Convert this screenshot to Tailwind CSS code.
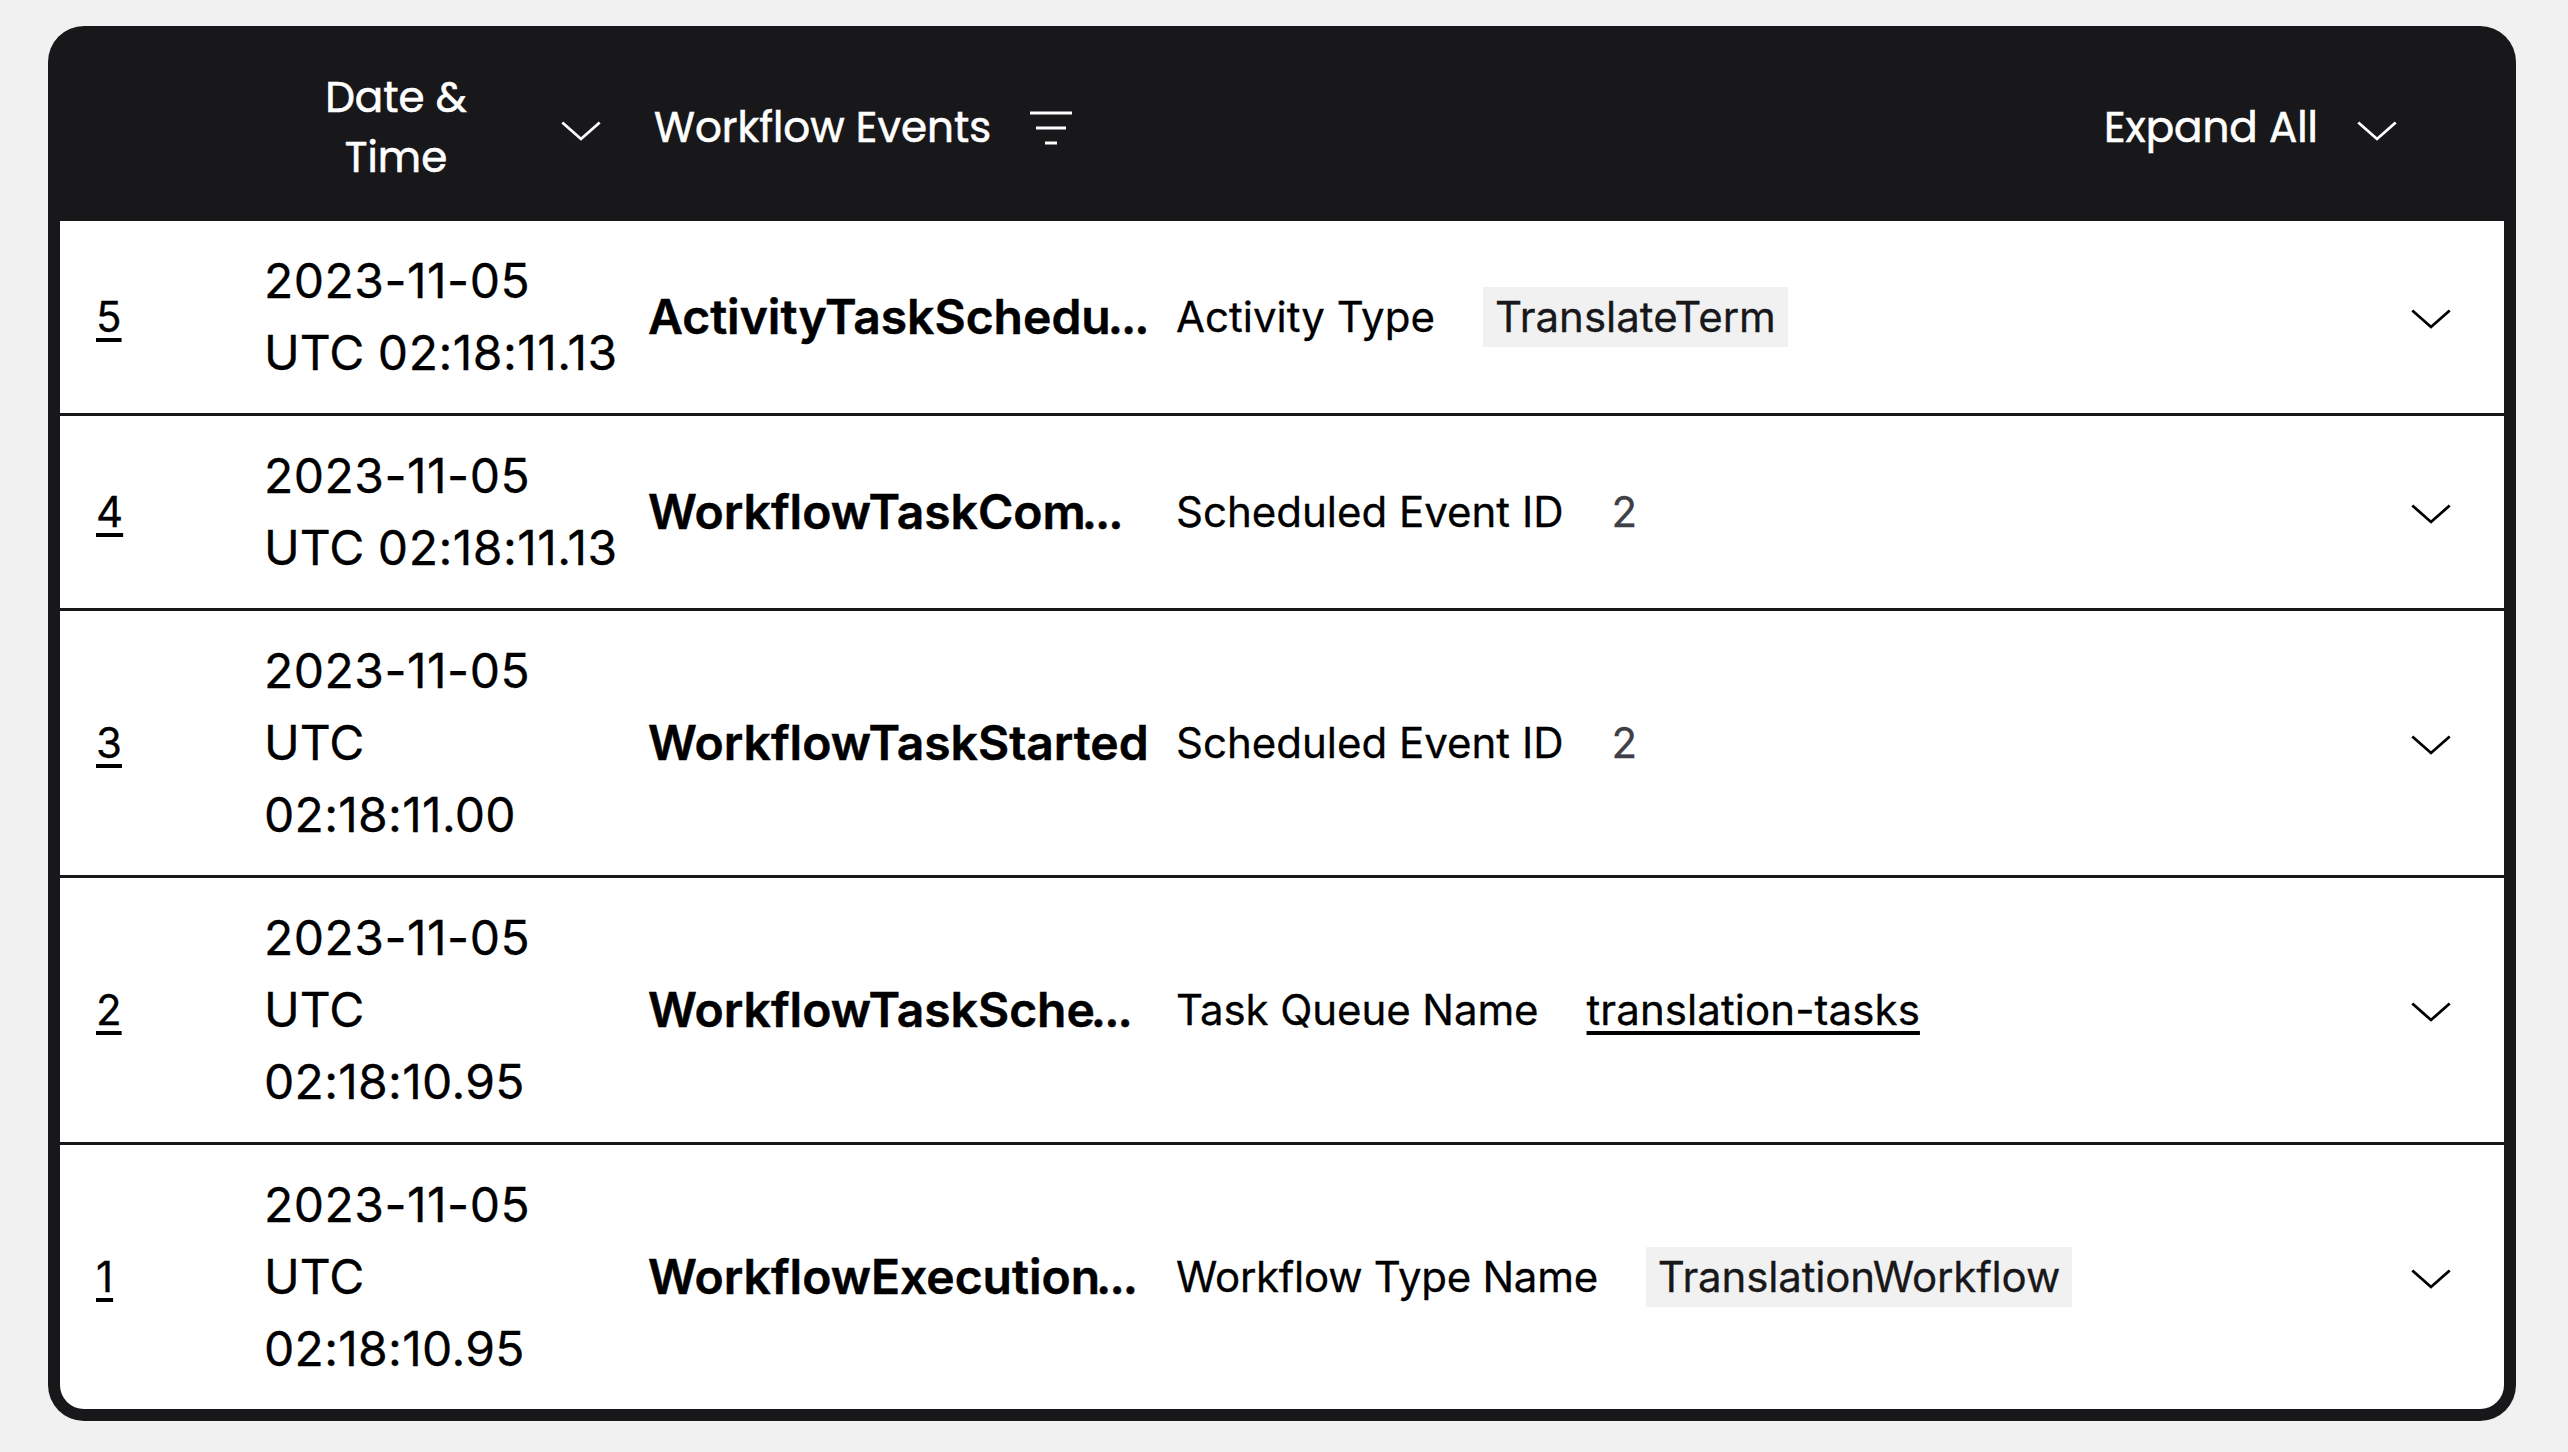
<!DOCTYPE html>
<html lang="en">
<head>
<meta charset="utf-8">
<title>Workflow Events</title>
<script src="https://cdn.jsdelivr.net/npm/@tailwindcss/browser@4"></script>
</head>
<body class="bg-[#f1f1f1] font-['Inter',sans-serif] text-black [-webkit-text-stroke:0.3px]">
<svg class="hidden">
  <symbol id="chevron" viewBox="0 0 40 20"><path d="M1.3 1.5 20 18 38.7 1.5" fill="none" stroke="currentColor" stroke-width="2.8"/></symbol>
</svg>
<main class="h-[1452px] w-[2568px] pt-[26px] pl-12">
  <section class="h-[1395px] w-[2468px] rounded-[36px] bg-zinc-900 p-3">
    <header class="flex h-[183px] items-center pb-1 text-[42px] leading-[60px] text-white font-['Poppins','Inter',sans-serif] [-webkit-text-stroke:0.6px]">
      <div class="ml-[236px] w-[200px] text-center">Date &amp;<br>Time</div>
      <svg class="mt-1.5 ml-[65px] h-5 w-10"><use href="#chevron"/></svg>
      <div class="ml-[53px] w-[336px] whitespace-nowrap">Workflow Events</div>
      <svg class="mt-px ml-[40px] h-[34px] w-[42px]" viewBox="0 0 42 34" fill="none" stroke="currentColor" stroke-width="3"><path d="M0 2h42M6 17h30M15 32h12"/></svg>
      <div class="ml-auto w-[213px] whitespace-nowrap">Expand All</div>
      <svg class="mt-1.5 mr-[107px] ml-[40px] h-5 w-10"><use href="#chevron"/></svg>
    </header>

    <div class="rounded-b-3xl bg-white">
      <div class="flex h-[195px] items-center border-b-3 border-zinc-900">
        <a class="ml-9 w-[168px] text-[42px] leading-[60px] underline decoration-4 underline-offset-[6px]">5</a>
        <div class="w-[384px] text-5xl leading-[72px] whitespace-nowrap"><span class="tracking-[0.5px]">2023-11-05</span><br>UTC <span class="tracking-[0.5px]">02:18:11.13</span></div>
        <div class="w-[504px] text-5xl leading-[72px] font-semibold whitespace-nowrap [-webkit-text-stroke:0.5px]">ActivityTaskSchedu<span class="-ml-[3px] tracking-[-2px]">...</span></div>
        <div class="ml-6 flex flex-1 items-center gap-12 text-[42px] leading-[60px]"><span>Activity Type</span><span class="bg-[#f1f1f1] px-3 text-zinc-900">TranslateTerm</span></div>
        <svg class="mt-1 mr-[53px] h-5 w-10"><use href="#chevron"/></svg>
      </div>

      <div class="flex h-[195px] items-center border-b-3 border-zinc-900">
        <a class="ml-9 w-[168px] text-[42px] leading-[60px] underline decoration-4 underline-offset-[6px]">4</a>
        <div class="w-[384px] text-5xl leading-[72px] whitespace-nowrap"><span class="tracking-[0.5px]">2023-11-05</span><br>UTC <span class="tracking-[0.5px]">02:18:11.13</span></div>
        <div class="w-[504px] text-5xl leading-[72px] font-semibold whitespace-nowrap [-webkit-text-stroke:0.5px]">WorkflowTaskCom<span class="-ml-[4px] tracking-[-2px]">...</span></div>
        <div class="ml-6 flex flex-1 items-center gap-12 text-[42px] leading-[60px]"><span>Scheduled Event ID</span><span class="text-zinc-700">2</span></div>
        <svg class="mt-1 mr-[53px] h-5 w-10"><use href="#chevron"/></svg>
      </div>

      <div class="flex h-[267px] items-center border-b-3 border-zinc-900">
        <a class="ml-9 w-[168px] text-[42px] leading-[60px] underline decoration-4 underline-offset-[6px]">3</a>
        <div class="w-[384px] text-5xl leading-[72px] whitespace-nowrap"><span class="tracking-[0.5px]">2023-11-05</span><br>UTC<br><span class="tracking-[0.3px]">02:18:11.00</span></div>
        <div class="w-[504px] text-5xl leading-[72px] font-semibold whitespace-nowrap [-webkit-text-stroke:0.5px]">WorkflowTaskStarted</div>
        <div class="ml-6 flex flex-1 items-center gap-12 text-[42px] leading-[60px]"><span>Scheduled Event ID</span><span class="text-zinc-700">2</span></div>
        <svg class="mt-1 mr-[53px] h-5 w-10"><use href="#chevron"/></svg>
      </div>

      <div class="flex h-[267px] items-center border-b-3 border-zinc-900">
        <a class="ml-9 w-[168px] text-[42px] leading-[60px] underline decoration-4 underline-offset-[6px]">2</a>
        <div class="w-[384px] text-5xl leading-[72px] whitespace-nowrap"><span class="tracking-[0.5px]">2023-11-05</span><br>UTC<br><span class="tracking-[0.3px]">02:18:10.95</span></div>
        <div class="w-[504px] text-5xl leading-[72px] font-semibold whitespace-nowrap [-webkit-text-stroke:0.5px]">WorkflowTaskSche<span class="-ml-[4px] tracking-[-2px]">...</span></div>
        <div class="ml-6 flex flex-1 items-center gap-12 text-[42px] leading-[60px]"><span class="tracking-[-0.08px]">Task Queue Name</span><a class="tracking-[0.08px] underline decoration-4 underline-offset-[6px]">translation-tasks</a></div>
        <svg class="mt-1 mr-[53px] h-5 w-10"><use href="#chevron"/></svg>
      </div>

      <div class="flex h-[264px] items-center">
        <a class="ml-9 w-[168px] text-[42px] leading-[60px] underline decoration-4 underline-offset-[6px]">1</a>
        <div class="w-[384px] text-5xl leading-[72px] whitespace-nowrap"><span class="tracking-[0.5px]">2023-11-05</span><br>UTC<br><span class="tracking-[0.3px]">02:18:10.95</span></div>
        <div class="w-[504px] text-5xl leading-[72px] font-semibold whitespace-nowrap [-webkit-text-stroke:0.5px]">WorkflowExecution<span class="-ml-[4px] tracking-[-2px]">...</span></div>
        <div class="ml-6 flex flex-1 items-center gap-12 text-[42px] leading-[60px]"><span class="tracking-[-0.28px]">Workflow Type Name</span><span class="bg-[#f1f1f1] px-3 tracking-[-0.15px] text-zinc-900">TranslationWorkflow</span></div>
        <svg class="mt-1 mr-[53px] h-5 w-10"><use href="#chevron"/></svg>
      </div>
    </div>
  </section>
</main>
</body>
</html>
